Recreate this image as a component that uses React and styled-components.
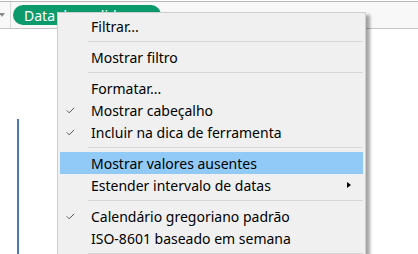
import styled, { createGlobalStyle } from "styled-components"

const GlobalStyle = createGlobalStyle`
  html, body { margin: 0; padding: 0; background: #fff; }
  body { font-family: "Noto Sans", "Open Sans", sans-serif; width: 418px; height: 254px; overflow: hidden; }
`

const Page = styled.div`
  position: relative;
  width: 418px;
  height: 254px;
  overflow: hidden;
`

const Toolbar = styled.div`
  display: flex;
  align-items: center;
  height: 26px;
  margin-top: 1px;
  border-top: 1px solid #b9b9b9;
  border-bottom: 1px solid #c4c4c4;
  background: #f8f8f8;
`

const Caret = styled.div`
  width: 0;
  height: 0;
  margin-left: -1px;
  border-left: 3px solid transparent;
  border-right: 3px solid transparent;
  border-top: 4px solid #8a8a8a;
`

const Divider = styled.div`
  align-self: stretch;
  width: 1px;
  margin-left: 5px;
  background: #d9d9d9;
`

const Pill = styled.div`
  display: flex;
  align-items: center;
  height: 20px;
  width: 148px;
  margin-left: 2px;
  padding-left: 11px;
  box-sizing: border-box;
  border-radius: 10px;
  background: #0b9a6b;
  color: #fff;
  font-size: 14px;
  white-space: nowrap;
  overflow: hidden;
`

const Canvas = styled.div`
  display: flex;
  padding: 90px 0 0 17px;
`

const AxisLine = styled.div`
  width: 2px;
  height: 140px;
  background: #4e78a5;
`

const Menu = styled.div`
  position: absolute;
  left: 57px;
  top: 12px;
  width: 309px;
  height: 260px;
  box-sizing: border-box;
  padding: 2px 2px;
  background: #f0f0f0;
  border: 1px solid #cfcfcf;
  box-shadow: 4px 3px 3px rgba(0, 0, 0, 0.35);
  font-size: 14px;
  color: #000;
`

const Item = styled.div`
  display: flex;
  align-items: center;
  height: 22px;
  background: ${p => (p.$active ? "#91c9f7" : "transparent")};
`

const Gutter = styled.div`
  display: flex;
  align-items: center;
  width: 31px;
  padding-left: 6px;
  box-sizing: border-box;
  flex: none;
`

const Label = styled.span`
  flex: 1;
  white-space: nowrap;
`

const Sub = styled.div`
  width: 0;
  height: 0;
  margin-right: 12px;
  border-top: 3.5px solid transparent;
  border-bottom: 3.5px solid transparent;
  border-left: 4px solid #000;
`

const Sep = styled.div`
  height: 1px;
  margin: 4px 0 4px 28px;
  background: #d7d7d7;
`

function Check() {
  return (
    <svg width="9" height="7" viewBox="0 0 9 7">
      <path d="M0.8 3.4 L3.2 5.8 L8.2 0.8" fill="none" stroke="#555" strokeWidth="1" />
    </svg>
  )
}

function MenuItem({ label, checked, active, sub }) {
  return (
    <Item $active={active}>
      <Gutter>{checked && <Check />}</Gutter>
      <Label>{label}</Label>
      {sub && <Sub />}
    </Item>
  )
}

export default function App() {
  return (
    <>
      <GlobalStyle />
      <Page>
        <Toolbar>
          <Caret />
          <Divider />
          <Pill>Data do pedido</Pill>
        </Toolbar>
        <Canvas>
          <AxisLine />
        </Canvas>
        <Menu>
          <MenuItem label="Filtrar..." />
          <Sep />
          <MenuItem label="Mostrar filtro" />
          <Sep />
          <MenuItem label="Formatar..." />
          <MenuItem label="Mostrar cabeçalho" checked />
          <MenuItem label="Incluir na dica de ferramenta" checked />
          <Sep />
          <MenuItem label="Mostrar valores ausentes" active />
          <MenuItem label="Estender intervalo de datas" sub />
          <Sep />
          <MenuItem label="Calendário gregoriano padrão" checked />
          <MenuItem label="ISO-8601 baseado em semana" />
          <Sep />
        </Menu>
      </Page>
    </>
  )
}
